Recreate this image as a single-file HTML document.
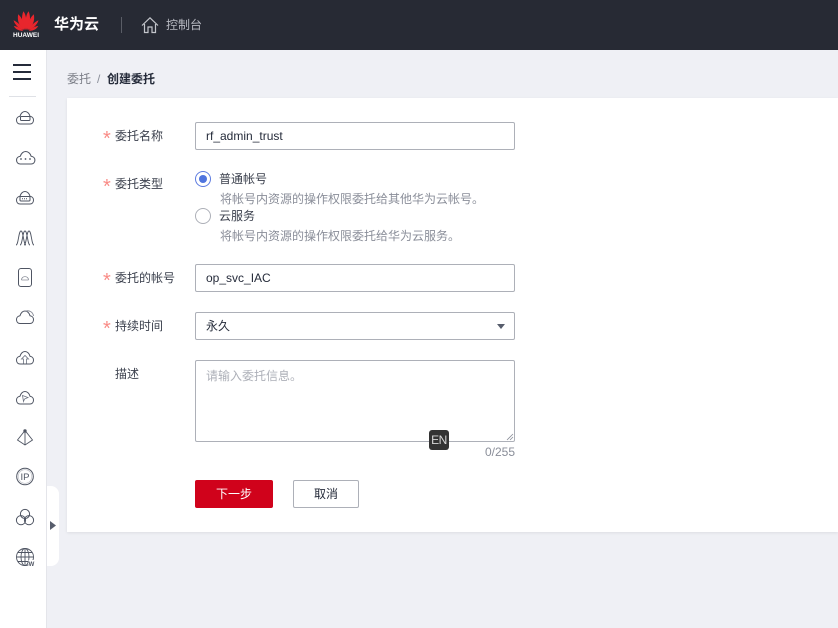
<!DOCTYPE html>
<html lang="zh">
<head>
<meta charset="utf-8">
<style>
html,body{margin:0;padding:0;width:838px;height:628px;overflow:hidden;background:#eff0f5;font-family:"Liberation Sans","Noto Sans CJK SC",sans-serif;color:#252b3a;font-size:12px}
div,span{position:absolute;white-space:nowrap;box-sizing:border-box}
.lab{font-size:12px;line-height:16px;color:#3b404d}
.star{color:#f98b86;font-size:20px;line-height:16px;left:103px}
.inp{left:195px;width:320px;height:28px;border:1px solid #adb0b8;border-radius:2px;background:#fff;padding-left:10px;line-height:26px;font-size:12px;color:#252b3a}
.hint{left:220px;font-size:12px;line-height:16px;color:#8a8e99}
svg{position:absolute;display:block}
</style>
</head>
<body>
<div style="left:0;top:0;width:838px;height:50px;background:#272a34"></div>
<svg style="left:13px;top:11px" width="26" height="20" viewBox="0 0 26 20">
<defs><g id="hw">
<path d="M12.6 19 C8.6 14 8 6 10.4 .2 C13.6 4 14 12 12.6 19Z"/>
<path d="M11.6 19 C6.5 15.500 3.800 10 5.200 3.200 C8.500 6 11.500 12 11.600 19Z"/>
<path d="M10.800 19.200 C6.500 17.500 2 14.500 .5 9.200 C4.500 11 9 15 10.800 19.200Z"/>
<path d="M10.200 19.800 C6.500 20 2.500 18.500 .8 15 C4 15.300 7.500 17 10.200 19.800Z"/>
</g></defs>
<use href="#hw" fill="#e8262d"/>
<use href="#hw" fill="#e8262d" transform="translate(26,0) scale(-1,1)"/>
</svg>
<span style="left:13px;top:31.500px;font-size:6.500px;line-height:8px;color:#fff;font-weight:700">HUAWEI</span>
<span style="left:54px;top:16px;font-size:15px;line-height:18px;color:#fff;font-weight:700">华为云</span>
<div style="left:121px;top:17px;width:1px;height:16px;background:#5a5d66"></div>
<svg style="left:141px;top:16px" width="18" height="18" viewBox="0 0 18 18" fill="none" stroke="#c4c6cc" stroke-width="1.200"><path d="M1 9.500 L9 1.800 L17 9.500"/><path d="M3.500 8 V16.500 H7 V11 H11 V16.500 H14.500 V8"/></svg>
<span style="left:166px;top:17px;font-size:12px;line-height:16px;color:#b8bac2">控制台</span>

<div style="left:0;top:50px;width:47px;height:578px;background:#fff;border-right:1px solid #e4e5ea"></div>
<div style="left:13px;top:64px;width:18px;height:2px;background:#252b3a"></div>
<div style="left:13px;top:71px;width:18px;height:2px;background:#252b3a"></div>
<div style="left:13px;top:78px;width:18px;height:2px;background:#252b3a"></div>
<div style="left:9px;top:96px;width:27px;height:1px;background:#dfe1e6"></div>

<svg style="left:0;top:0" width="47" height="628" viewBox="0 0 47 628" fill="none" stroke="#4f5563" stroke-width="1">
<defs><path id="c" d="M4 13 C1.500 13 .5 11 .5 9 C.5 7 2 5.500 4 5.200 C5 2.200 7 .5 9 .5 C11 .5 13.300 2.200 14 5.200 C16 5.500 17.500 7 17.500 9 C17.500 11 16.500 13 14 13 Z"/></defs>
<g transform="translate(16,111)"><use href="#c"/><rect x="4.500" y="5.500" width="9.500" height="4" rx="1"/></g>
<g transform="translate(16,151) scale(1.080,1)" ><use href="#c"/></g>
<g fill="#4f5563" stroke="none"><circle cx="21" cy="159" r=".9"/><circle cx="25.500" cy="159" r=".9"/><circle cx="30" cy="159" r=".9"/></g>
<g transform="translate(16,191)"><use href="#c"/><rect x="4" y="5.500" width="10" height="4.500" rx="1"/><path d="M6 7.700H12" stroke-dasharray="1 1"/></g>
<g stroke-width=".9"><path d="M16 245 C18.500 245 18.500 231 21 231 C23.500 231 23.500 245 26 245"/><path d="M20 245 C22.500 245 22.500 231 25 231 C27.500 231 27.500 245 30 245"/><path d="M24 245 C26.500 245 26.500 231 29 231 C31.500 231 31.500 245 34 245"/></g>
<rect x="18.500" y="268.500" width="13" height="18" rx="2.500"/>
<path d="M21.500 280 C21.500 275.500 28.500 275.500 28.500 280 M21.500 280 H28.500" stroke="#8a8e99" stroke-width=".8"/>
<g transform="translate(16,310.500)"><use href="#c"/><path d="M10 .5 C13 -.5 17 1.500 17.500 5.500" stroke="#8a8e99"/></g>
<g transform="translate(16,351)"><use href="#c"/><path d="M7.500 12.500 V8 H5.500 L9 4.500 L12.500 8 H10.500 V12.500" stroke-width=".8" stroke="#6c7280"/></g>
<g transform="translate(16,391)"><use href="#c"/><path d="M6.500 4.500 L12 6.500 L8.500 8 L7.500 10.500 Z" stroke-width=".8" stroke="#6c7280"/></g>
<g stroke-width=".9"><path d="M25 430.500 L17.500 440 L25 445 L32.500 440 Z"/><path d="M25 430.500 V445"/></g><circle cx="25" cy="431" r="1.700" fill="#4f5563" stroke="none"/>
<circle cx="25" cy="476.500" r="8.300"/><circle cx="25" cy="476.500" r="6.800" stroke="#b8bac2" stroke-width=".6"/>
<text x="25" y="480" font-family="Liberation Sans" font-size="9.500" fill="#4f5563" stroke="none" text-anchor="middle">IP</text>
<circle cx="25" cy="514" r="4.600"/><circle cx="21" cy="520.200" r="4.600"/><circle cx="29" cy="520.200" r="4.600"/>
<g stroke-width=".9"><circle cx="25" cy="557" r="8.500"/><ellipse cx="25" cy="557" rx="4" ry="8.500"/><path d="M16.500 557H33.500M17.700 552.500H32.300M17.700 561.500H32.300M25 548.500V565.500"/></g>
<rect x="28.500" y="560" width="6.500" height="6.500" fill="#fff" stroke="none"/>
<text x="31.500" y="566" font-family="Liberation Sans" font-size="6" font-weight="700" fill="#4f5563" stroke="none" text-anchor="middle">W</text>
</svg>

<div style="left:47px;top:486px;width:12px;height:80px;background:#fff;border-radius:0 8px 8px 0"></div>
<svg style="left:50px;top:521px" width="6" height="9"><path d="M0 0L6 4.500L0 9Z" fill="#575d6c"/></svg>

<span style="left:67px;top:71px;font-size:12px;line-height:16px;color:#7b7e87">委托</span>
<span style="left:97px;top:71px;font-size:12px;line-height:16px;color:#8a8e99">/</span>
<span style="left:107px;top:71px;font-size:12px;line-height:16px;color:#252b3a;font-weight:700">创建委托</span>

<div style="left:67px;top:98px;width:771px;height:434px;background:#fff;box-shadow:0 1px 3px rgba(0,0,0,.08)"></div>

<span class="star" style="top:131px">*</span><span class="lab" style="left:115px;top:128px">委托名称</span>
<div class="inp" style="top:122px">rf_admin_trust</div>

<span class="star" style="top:179px">*</span><span class="lab" style="left:115px;top:176px">委托类型</span>
<div style="left:195px;top:171px;width:16px;height:16px;border:1px solid #5e7ce0;border-radius:50%;background:#fff"></div>
<div style="left:199px;top:175px;width:8px;height:8px;border-radius:50%;background:#4f74de"></div>
<span class="lab" style="left:219px;top:171px">普通帐号</span>
<span class="hint" style="top:191px">将帐号内资源的操作权限委托给其他华为云帐号。</span>
<div style="left:195px;top:208px;width:16px;height:16px;border:1px solid #adb0b8;border-radius:50%;background:#fff"></div>
<span class="lab" style="left:219px;top:208px">云服务</span>
<span class="hint" style="top:228px">将帐号内资源的操作权限委托给华为云服务。</span>

<span class="star" style="top:273px">*</span><span class="lab" style="left:115px;top:270px">委托的帐号</span>
<div class="inp" style="top:264px">op_svc_IAC</div>

<span class="star" style="top:321px">*</span><span class="lab" style="left:115px;top:318px">持续时间</span>
<div class="inp" style="top:312px">永久</div>
<svg style="left:497px;top:324px" width="8" height="5"><path d="M0 0H8L4 5Z" fill="#575d6c"/></svg>

<span class="lab" style="left:115px;top:366px">描述</span>
<div style="left:195px;top:360px;width:320px;height:82px;border:1px solid #adb0b8;border-radius:2px;background:#fff;padding:7px 10px;line-height:16px;color:#adb0b8">请输入委托信息。</div>
<svg style="left:506px;top:433px" width="8" height="8" stroke="#8a8e99" stroke-width=".8"><path d="M1 7L7 1M4 7L7 4"/></svg>
<div style="left:429px;top:430px;width:20px;height:20px;background:#333;border-radius:3px;color:#d8d8d8;font-size:12px;line-height:20px;text-align:center;letter-spacing:-.4px">EN</div>
<span style="left:485px;top:444px;font-size:12px;line-height:16px;color:#8a8e99">0/255</span>

<div style="left:195px;top:480px;width:78px;height:28px;background:#d0021b;border-radius:2px;color:#fff;text-align:center;line-height:28px">下一步</div>
<div style="left:293px;top:480px;width:66px;height:28px;background:#fff;border:1px solid #adb0b8;border-radius:2px;color:#252b3a;text-align:center;line-height:26px">取消</div>
</body>
</html>
